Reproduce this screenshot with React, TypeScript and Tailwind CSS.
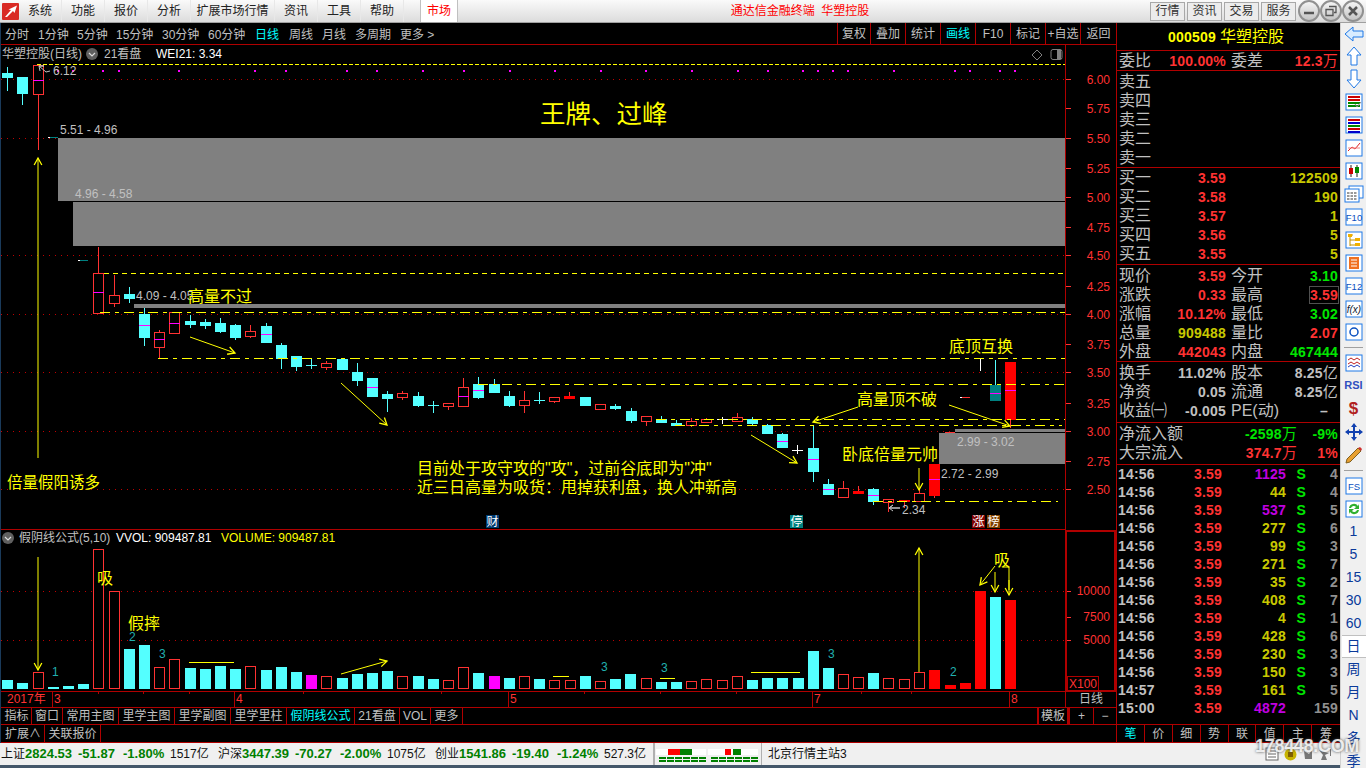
import React from "react";

const RED = "#ff3232";
const DK = "#b00000";
const CY = "#54ffff";
const YL = "#ffff00";

type K = "c" | "r" | "R" | "t" | "w";
const candles: [number, number, number, number, number, K, number?][] = [
  [7, 73, 77, 67, 91, "c"], [22, 77, 93, 77, 105, "c"], [38, 65, 94, 65, 150, "r", 80],
  [98, 273, 313, 247, 313, "r", 292], [114, 295, 303, 275, 307, "r"], [129, 294, 298, 287, 303, "c"],
  [144, 314, 337, 308, 346, "c", 325], [159, 332, 347, 330, 358, "r", 339], [174, 312, 333, 312, 333, "r", 323],
  [190, 321, 324, 315, 328, "c"], [205, 322, 325, 319, 329, "c"], [220, 323, 331, 318, 333, "c"],
  [235, 325, 337, 324, 340, "c"], [250, 331, 336, 325, 338, "r"], [266, 326, 342, 323, 343, "c", 334],
  [281, 345, 358, 343, 369, "c"], [296, 356, 366, 356, 371, "c"], [311, 365, 365, 359, 369, "c"],
  [326, 363, 367, 361, 370, "r"], [342, 359, 369, 358, 370, "c"], [357, 372, 380, 363, 386, "c"],
  [372, 378, 396, 378, 397, "c", 387], [387, 394, 398, 391, 412, "c"], [402, 393, 397, 391, 400, "r"],
  [418, 396, 405, 392, 407, "c"], [433, 405, 405, 401, 413, "c"], [448, 403, 406, 403, 410, "r"],
  [463, 387, 406, 378, 406, "r", 396], [478, 384, 397, 377, 399, "c", 390], [494, 384, 392, 379, 392, "c"],
  [509, 396, 405, 391, 407, "c"], [524, 400, 405, 391, 413, "r"], [539, 400, 400, 392, 404, "c"],
  [554, 397, 401, 397, 403, "r"], [569, 396, 398, 392, 398, "R"], [585, 397, 405, 397, 406, "c"],
  [600, 404, 409, 404, 409, "r"], [615, 406, 408, 404, 410, "c"], [631, 411, 420, 408, 423, "c"],
  [646, 416, 421, 416, 426, "r"], [661, 419, 422, 416, 422, "c"], [676, 423, 425, 420, 426, "c"],
  [691, 421, 425, 418, 427, "r"], [706, 419, 422, 418, 423, "r"], [722, 419, 419, 417, 424, "w"],
  [737, 417, 421, 413, 421, "r"], [752, 419, 423, 417, 426, "c"], [767, 425, 433, 424, 433, "c"],
  [782, 434, 447, 433, 448, "c", 441], [797, 450, 450, 445, 454, "w"], [813, 448, 471, 425, 482, "c", 459],
  [828, 484, 494, 479, 495, "c", 489], [843, 488, 497, 481, 497, "r"], [858, 491, 493, 486, 493, "R"],
  [873, 489, 501, 488, 505, "c", 495], [888, 499, 502, 499, 512, "r"], [904, 500, 501, 500, 508, "R"],
  [919, 493, 501, 490, 501, "r"], [934, 464, 495, 464, 498, "R", 479], [995, 385, 400, 360, 400, "t", 393],
  [1010, 362, 419, 362, 428, "R", 390],
];

const vols: [number, number, "c" | "r" | "R" | "m"][] = [
  [7, 680, "c"], [22, 683, "c"], [38, 672, "r"], [53, 687, "c"], [68, 686, "c"], [83, 684, "c"], [98, 549, "r"],
  [114, 591, "r"], [129, 649, "c"], [144, 645, "c"], [159, 667, "r"], [174, 659, "r"], [190, 668, "c"], [205, 669, "c"],
  [220, 666, "c"], [235, 669, "c"], [250, 666, "r"], [266, 670, "c"], [281, 667, "c"], [296, 672, "c"], [311, 675, "m"],
  [326, 676, "r"], [342, 678, "c"], [357, 674, "c"], [372, 673, "c"], [387, 671, "c"], [402, 676, "r"], [418, 676, "c"],
  [433, 679, "c"], [448, 680, "r"], [463, 667, "r"], [478, 673, "c"], [494, 676, "m"], [509, 678, "c"], [524, 676, "r"],
  [539, 679, "c"], [554, 680, "r"], [570, 680, "r"], [585, 676, "c"], [600, 681, "r"], [615, 679, "c"], [630, 674, "c"],
  [646, 678, "r"], [661, 682, "c"], [676, 682, "c"], [691, 681, "r"], [706, 679, "r"], [722, 680, "r"], [737, 676, "r"],
  [752, 680, "c"], [767, 678, "c"], [782, 678, "c"], [798, 678, "c"], [813, 651, "c"], [828, 668, "c"], [843, 674, "r"],
  [858, 677, "r"], [873, 673, "c"], [888, 678, "r"], [904, 679, "r"], [919, 672, "r"], [934, 670, "R"], [950, 685, "R"],
  [965, 683, "R"], [980, 591, "R"], [995, 597, "c"], [1010, 600, "R"],
];

const priceAxis: [string, number][] = [
  ["6.00", 79], ["5.75", 108], ["5.50", 138], ["5.25", 168], ["5.00", 197], ["4.75", 227], ["4.50", 255], ["4.25", 286],
  ["4.00", 314], ["3.75", 344], ["3.50", 372], ["3.25", 403], ["3.00", 431], ["2.75", 461], ["2.50", 489],
];
const dots = [42, 57, 72, 102, 118, 178, 254, 285, 346, 376, 422, 463, 509, 554, 600, 645, 691, 737, 767, 802, 817, 832, 847, 893, 954, 969, 999, 1014];

function Arrow({ x1, y1, x2, y2 }: { x1: number; y1: number; x2: number; y2: number }) {
  const a = Math.atan2(y2 - y1, x2 - x1);
  const h = 8;
  const p = (d: number) => `${x2 - h * Math.cos(a + d)},${y2 - h * Math.sin(a + d)}`;
  return (
    <g stroke={YL} strokeWidth="1" fill="none">
      <line x1={x1} y1={y1} x2={x2} y2={y2} />
      <polyline points={`${p(0.5)} ${x2},${y2} ${p(-0.5)}`} strokeWidth="1.3" />
    </g>
  );
}

function T({ x, y, s = 12, f = "#c0c0c0", a, children }: { x: number; y: number; s?: number; f?: string; a?: "end" | "middle"; children: React.ReactNode }) {
  return (
    <text x={x} y={y} fontSize={s} fill={f} textAnchor={a} dominantBaseline="central">
      {children}
    </text>
  );
}

function Chart() {
  return (
    <svg viewBox="1 45 1115 662" width={1115} height={662} className="block shrink-0">
      <g shapeRendering="crispEdges" fill="#808080">
        <rect x="58" y="138" width="1007" height="63" />
        <rect x="73" y="202" width="992" height="44" />
        <rect x="134" y="304" width="931" height="4" />
        <rect x="955" y="429" width="110" height="3" />
        <rect x="939" y="433" width="126" height="31" />
      </g>
      <g stroke="#c00000" strokeWidth="1" strokeDasharray="1 5" shapeRendering="crispEdges">
        {[79, 138, 255, 314, 372, 431, 489, 591, 640].map((y) => (
          <line key={y} x1="1" x2={y === 138 ? 58 : y === 431 ? 955 : 1065} y1={y + 0.5} y2={y + 0.5} />
        ))}
      </g>
      {dots.map((x) => (
        <rect key={x} x={x} y="70" width="2" height="2" fill="#ff00ff" shapeRendering="crispEdges" />
      ))}
      <g shapeRendering="crispEdges">
        <rect x="48" y="137" width="2" height="1" fill="#fff" />
        <rect x="50" y="137" width="8" height="1" fill="#008080" />
        <rect x="78" y="260" width="2" height="1" fill="#fff" />
        <rect x="80" y="260" width="8" height="1" fill="#008080" />
        <rect x="945" y="432" width="10" height="1" fill={RED} />
        <rect x="960" y="397" width="2" height="1" fill="#fff" />
        <rect x="962" y="397" width="8" height="1" fill={RED} />
        <rect x="980" y="358" width="1" height="13" fill="#fff" />
      </g>
      <g shapeRendering="crispEdges">
        {candles.map(([x, t, b, wt, wb, k, m], i) => {
          const col = k === "c" ? CY : k === "w" ? "#fff" : k === "t" ? CY : RED;
          return (
            <g key={i}>
              <line x1={x + 0.5} x2={x + 0.5} y1={wt} y2={wb} stroke={col} />
              {t === b ? (
                <line x1={x - 5} x2={x + 6} y1={t + 0.5} y2={t + 0.5} stroke={col} />
              ) : k === "r" ? (
                <rect x={x - 4.5} y={t + 0.5} width="10" height={b - t} fill="#000" stroke={RED} />
              ) : (
                <rect x={x - 5} y={t} width="11" height={b - t + 1} fill={k === "c" ? CY : k === "t" ? "#008080" : "#ff0000"} />
              )}
              {m ? <rect x={x - 5} y={m} width="11" height="1" fill="#ff00ff" /> : null}
            </g>
          );
        })}
      </g>
      <g stroke={YL} strokeWidth="1" shapeRendering="crispEdges">
        <line x1="37" x2="1065" y1="64.5" y2="64.5" strokeDasharray="4 2" />
        <line x1="104" x2="1065" y1="273.5" y2="273.5" strokeDasharray="5 4" />
        <line x1="100" x2="1065" y1="312.5" y2="312.5" strokeDasharray="10 5 4 5" />
        <line x1="158" x2="1065" y1="358.5" y2="358.5" strokeDasharray="10 5 4 5" />
        <line x1="478" x2="1065" y1="384.5" y2="384.5" strokeDasharray="10 5 4 5" />
        <line x1="656" x2="1065" y1="419.5" y2="419.5" strokeDasharray="10 5 4 5" />
        <line x1="675" x2="1062" y1="425.5" y2="425.5" strokeDasharray="10 5 4 5" />
        <line x1="873" x2="1058" y1="501.5" y2="501.5" strokeDasharray="10 5 4 5" />
        <line x1="553" x2="569" y1="676.5" y2="676.5" />
        <line x1="660" x2="675" y1="678.5" y2="678.5" />
        <line x1="751" x2="800" y1="672.5" y2="672.5" />
        <line x1="189" x2="234" y1="662.5" y2="662.5" />
      </g>
      <Arrow x1={38} y1={458} x2={38} y2={158} />
      <Arrow x1={190} y1={337} x2={235} y2={353} />
      <Arrow x1={341} y1={383} x2={387} y2={425} />
      <Arrow x1={751} y1={435} x2={797} y2={463} />
      <Arrow x1={858} y1={407} x2={813} y2={422} />
      <Arrow x1={949} y1={405} x2={1010} y2={426} />
      <Arrow x1={919} y1={468} x2={919} y2={490} />
      <Arrow x1={38} y1={557} x2={38} y2={670} />
      <Arrow x1={919} y1={672} x2={919} y2={548} />
      <Arrow x1={995} y1={566} x2={980} y2={585} />
      <Arrow x1={995} y1={572} x2={995} y2={592} />
      <polyline points="1003,567 1009,567 1009,590" stroke={YL} fill="none" />
      <Arrow x1={1009} y1={580} x2={1009} y2={595} />
      <Arrow x1={341} y1={674} x2={387} y2={661} />
      <g stroke="#c0c0c0" fill="none">
        <polyline points="50,71 46,72 39,66 44,66 39,66 40,71" />
        <polyline points="889,508 900,508 889,508 893,505 889,508 893,511" />
      </g>
      <g shapeRendering="crispEdges">
        {vols.map(([x, t, k]) =>
          k === "r" ? (
            <rect key={x} x={x - 4.5} y={t + 0.5} width="10" height={689 - t - 1} fill="#000" stroke={RED} />
          ) : (
            <rect key={x} x={x - 5} y={t} width="11" height={689 - t} fill={k === "c" ? CY : k === "m" ? "#ff00ff" : "#ff0000"} />
          ),
        )}
      </g>
      <g stroke={DK} shapeRendering="crispEdges" fill="none">
        <line x1="1" x2="1066" y1="529.5" y2="529.5" />
        <line x1="1" x2="1116" y1="691.5" y2="691.5" />
        <line x1="1065.5" x2="1065.5" y1="45" y2="529" />
        <rect x="1066" y="530.5" width="49" height="160" strokeWidth="2" />
        <rect x="1067.5" y="676.5" width="31" height="14" />
        <line x1="1065.5" x2="1065.5" y1="691" y2="707" />
        {[52, 234, 508, 812, 1009].map((x) => (
          <line key={x} x1={x + 0.5} x2={x + 0.5} y1="691" y2="707" />
        ))}
        {[98, 143, 189, 303, 441, 584, 660, 736, 861, 911].map((x) => (
          <line key={x} x1={x + 0.5} x2={x + 0.5} y1="691" y2="694" />
        ))}
        {priceAxis.map(([, y]) => (
          <line key={y} x1="1066" x2="1071" y1={y + 0.5} y2={y + 0.5} stroke={RED} />
        ))}
        {[591, 617, 640].map((y) => (
          <line key={y} x1="1067" x2="1071" y1={y + 0.5} y2={y + 0.5} stroke={RED} />
        ))}
      </g>
      {priceAxis.map(([l, y]) => (
        <T key={l} x={1110} y={y + 0.5} f={RED} a="end">{l}</T>
      ))}
      <T x={1110} y={591} f={RED} a="end">10000</T>
      <T x={1110} y={617} f={RED} a="end">7500</T>
      <T x={1110} y={640} f={RED} a="end">5000</T>
      <T x={1069} y={683.5} f={RED}>X100</T>
      <T x={1091} y={699} a="middle">日线</T>
      <T x={7} y={699} f={RED}>2017年</T>
      <T x={54} y={699} f={RED}>3</T>
      <T x={236} y={699} f={RED}>4</T>
      <T x={510} y={699} f={RED}>5</T>
      <T x={814} y={699} f={RED}>7</T>
      <T x={1011} y={699} f={RED}>8</T>
      <T x={2} y={54}>华塑控股(日线)</T>
      <circle cx="92" cy="54" r="6" fill="#606060" />
      <polyline points="89,53 92,56 95,53" stroke="#ddd" fill="none" strokeWidth="1.2" />
      <T x={104} y={54}>21看盘</T>
      <T x={156} y={54} f="#ffffff">WEI21: 3.34</T>
      <polygon points="1037,50 1042,55 1037,60 1032,55" fill="none" stroke="#808080" />
      <rect x="1051" y="49.5" width="11" height="10" rx="2" fill="#000" stroke="#808080" />
      <rect x="1057" y="50" width="4" height="9" fill="#808080" />
      <circle cx="8" cy="538" r="6" fill="#606060" />
      <polyline points="5,537 8,540 11,537" stroke="#ddd" fill="none" strokeWidth="1.2" />
      <T x={19} y={538}>假阴线公式(5,10)</T>
      <T x={116} y={538} f="#ffffff">VVOL: 909487.81</T>
      <T x={221} y={538} f={YL}>VOLUME: 909487.81</T>
      <T x={53} y={71}>6.12</T>
      <T x={60} y={130}>5.51 - 4.96</T>
      <T x={75} y={194}>4.96 - 4.58</T>
      <T x={136} y={296}>4.09 - 4.05</T>
      <T x={957} y={442}>2.99 - 3.02</T>
      <T x={941} y={474}>2.72 - 2.99</T>
      <T x={902} y={510}>2.34</T>
      <T x={540} y={114} s={25.5} f={YL}>王牌、过峰</T>
      <T x={188} y={296} s={16} f={YL}>高量不过</T>
      <T x={7} y={482} s={15.5} f={YL}>倍量假阳诱多</T>
      <T x={417} y={468} s={16} f={YL}>目前处于攻守攻的"攻"，过前谷底即为"冲"</T>
      <T x={417} y={487} s={16} f={YL}>近三日高量为吸货：甩掉获利盘，换人冲新高</T>
      <T x={949} y={346} s={16} f={YL}>底顶互换</T>
      <T x={857} y={399} s={16} f={YL}>高量顶不破</T>
      <T x={842} y={454} s={16} f={YL}>卧底倍量元帅</T>
      <T x={97} y={578} s={16} f={YL}>吸</T>
      <T x={128} y={623} s={16} f={YL}>假摔</T>
      <T x={994} y={560} s={16} f={YL}>吸</T>
      {[[52, 672, "1"], [129, 637, "2"], [159, 654, "3"], [601, 667, "3"], [661, 668, "3"], [828, 654, "3"], [950, 672, "2"]].map(([x, y, v]) => (
        <T key={`${x}`} x={x as number} y={y as number} f="#20b0b0">{v}</T>
      ))}
      {[[486, "财", "#003a70"], [790, "停", "#008080"], [972, "涨", "#800000"], [987, "榜", "#804000"]].map(([x, l, c]) => (
        <g key={`${x}`}>
          <rect x={x as number} y="515" width="13" height="13" fill={c as string} />
          <T x={(x as number) + 6.5} y={521.5} a="middle" f="#ffffff">{l}</T>
        </g>
      ))}
    </svg>
  );
}

function Cell({ w, cy, children }: { w: string; cy?: boolean; children: React.ReactNode }) {
  return (
    <div className={`${w} h-full shrink-0 flex items-center justify-center border-r border-[#b00000] text-[12px] whitespace-nowrap ${cy ? "text-[#00ffff]" : "text-[#c0c0c0]"}`}>
      {children}
    </div>
  );
}

function TopBar() {
  const periods: [string, string, boolean?][] = [
    ["分时", "w-[33px]"], ["1分钟", "w-[39px]"], ["5分钟", "w-[39px]"], ["15分钟", "w-[46px]"], ["30分钟", "w-[46px]"],
    ["60分钟", "w-[47px]"], ["日线", "w-[34px]", true], ["周线", "w-[33px]"], ["月线", "w-[33px]"], ["多周期", "w-[45px]"], ["更多 >", "w-[40px]"],
  ];
  const tools: [string, string, boolean?][] = [
    ["复权", "w-[33px]"], ["叠加", "w-[35px]"], ["统计", "w-[35px]"], ["画线", "w-[35px]", true], ["F10", "w-[35px]"],
    ["标记", "w-[35px]"], ["+自选", "w-[35px]"], ["返回", "w-[35px]"],
  ];
  return (
    <div className="h-[22px] shrink-0 flex items-center border-b border-[#b00000] text-[12px] text-[#c0c0c0] pl-[4px]">
      {periods.map(([l, w, c]) => (
        <span key={l} className={`${w} shrink-0 whitespace-nowrap pt-[2px] ${c ? "text-[#00ffff]" : ""}`}>{l}</span>
      ))}
      <div className="flex-1" />
      <div className="flex h-full border-l border-[#b00000]">
        {tools.map(([l, w, c], i) => (
          <div key={l} className={`${w} h-full flex items-center justify-center ${i < tools.length - 1 ? "border-r border-[#b00000]" : ""} ${c ? "text-[#00ffff]" : ""}`}>{l}</div>
        ))}
      </div>
    </div>
  );
}

function BottomTabs() {
  return (
    <>
      <div className="h-[18px] shrink-0 flex border-y border-[#b00000] pl-px">
        <Cell w="w-[30px]">指标</Cell>
        <Cell w="w-[31px]">窗口</Cell>
        <Cell w="w-[56px]">常用主图</Cell>
        <Cell w="w-[56px]">里学主图</Cell>
        <Cell w="w-[56px]">里学副图</Cell>
        <Cell w="w-[56px]">里学里柱</Cell>
        <Cell w="w-[68px]" cy>假阴线公式</Cell>
        <Cell w="w-[45px]">21看盘</Cell>
        <Cell w="w-[31px]">VOL</Cell>
        <Cell w="w-[32px]">更多</Cell>
        <div className="flex-1 border-r-2 border-[#b00000]" />
        <Cell w="w-[29px]">模板</Cell>
        <div className="w-[2px] h-full bg-[#b00000]" />
        <Cell w="w-[24px]">+</Cell>
        <div className="w-[22px] h-full flex items-center justify-center text-[12px] text-[#c0c0c0]">−</div>
      </div>
      <div className="h-[18px] shrink-0 flex border-b border-[#b00000] pl-px">
        <Cell w="w-[43px]">扩展∧</Cell>
        <Cell w="w-[56px]">关联报价</Cell>
      </div>
    </>
  );
}

const numCls = "text-[14px] font-bold tracking-[0.2px] leading-none";

function L({ children, w = "w-[32px]" }: { children: React.ReactNode; w?: string }) {
  return <span className={`${w} shrink-0 text-[16px] leading-none text-[#c0c0c0] whitespace-nowrap`}>{children}</span>;
}
function V({ children, c, w = "w-[75px]" }: { children: React.ReactNode; c: string; w?: string }) {
  return <span className={`${w} shrink-0 text-right whitespace-nowrap ${numCls}`} style={{ color: c }}>{children}</span>;
}

function Row2({ a, b, ac, c, d, dc }: { a: string; b: React.ReactNode; ac: string; c: string; d: React.ReactNode; dc: string }) {
  return (
    <div className="h-[19px] flex items-center pl-[2px]">
      <L>{a}</L>
      <V c={ac}>{b}</V>
      <span className="w-[5px] shrink-0" />
      <L>{c}</L>
      <V c={dc}>{d}</V>
    </div>
  );
}

const OL = "#c8c800";
const GR = "#00e600";
const GY = "#c0c0c0";

function RightPanel() {
  const buy: [string, string, string][] = [
    ["买一", "3.59", "122509"], ["买二", "3.58", "190"], ["买三", "3.57", "1"], ["买四", "3.56", "5"], ["买五", "3.55", "5"],
  ];
  const ticks: [string, string, boolean, number | string][] = [
    ["14:56", "1125", true, 4], ["14:56", "44", false, 4], ["14:56", "537", true, 5], ["14:56", "277", false, 6],
    ["14:56", "99", false, 3], ["14:56", "271", false, 7], ["14:56", "35", false, 2], ["14:56", "408", false, 7],
    ["14:56", "4", false, 1], ["14:56", "428", false, 6], ["14:56", "230", false, 3], ["14:56", "150", false, 3],
    ["14:57", "161", false, 5], ["15:00", "4872", true, 159],
  ];
  const sec = "shrink-0 border-b border-[#b00000]";
  return (
    <div className="w-[224px] shrink-0 flex flex-col border-l border-[#b00000]">
      <div className={`${sec} h-[28px] flex items-center justify-center gap-[4px] pr-[5px]`}>
        <span className={`${numCls} text-[#ffff00]`}>000509</span>
        <span className="text-[16px] leading-none text-[#ffff00]">华塑控股</span>
      </div>
      <div className={`${sec} h-[20px]`}>
        <Row2 a="委比" b="100.00%" ac={RED} c="委差" d={<>12.3<span className="font-normal text-[15px]">万</span></>} dc={RED} />
      </div>
      <div className={`${sec} h-[97px] pt-px`}>
        {["卖五", "卖四", "卖三", "卖二", "卖一"].map((l) => (
          <div key={l} className="h-[19px] flex items-center pl-[2px]"><L>{l}</L></div>
        ))}
      </div>
      <div className={`${sec} h-[97px]`}>
        {buy.map(([l, p, q]) => (
          <div key={l} className="h-[19px] flex items-center pl-[2px]">
            <L>{l}</L>
            <V c={RED}>{p}</V>
            <V c={OL} w="w-[112px]">{q}</V>
          </div>
        ))}
      </div>
      <div className={`${sec} h-[97px] pt-px`}>
        <Row2 a="现价" b="3.59" ac={RED} c="今开" d="3.10" dc={GR} />
        <div className="h-[19px] flex items-center pl-[2px]">
          <L>涨跌</L>
          <V c={RED}>0.33</V>
          <span className="w-[5px] shrink-0" />
          <L>最高</L>
          <span className="w-[46px] shrink-0" />
          <span className={`w-[30px] h-[18px] shrink-0 flex items-center justify-center border border-[#505050] text-[#ff3232] ${numCls}`}>3.59</span>
        </div>
        <Row2 a="涨幅" b="10.12%" ac={RED} c="最低" d="3.02" dc={GR} />
        <Row2 a="总量" b="909488" ac={OL} c="量比" d="2.07" dc={RED} />
        <Row2 a="外盘" b="442043" ac={RED} c="内盘" d="467444" dc={GR} />
      </div>
      <div className={`${sec} h-[61px] pt-px`}>
        <Row2 a="换手" b="11.02%" ac={GY} c="股本" d={<>8.25<span className="font-normal text-[15px]">亿</span></>} dc={GY} />
        <Row2 a="净资" b="0.05" ac={GY} c="流通" d={<>8.25<span className="font-normal text-[15px]">亿</span></>} dc={GY} />
        <Row2 a="收益㈠" b="-0.005" ac={GY} c="PE(动)" d={<span className="mr-[10px]">–</span>} dc={GY} />
      </div>
      <div className={`${sec} h-[42px] pt-px`}>
        <div className="h-[19px] flex items-center pl-[2px]">
          <L w="w-[64px]">净流入额</L>
          <V c={GR} w="w-[114px]">-2598<span className="font-normal text-[15px]">万</span></V>
          <V c={GR} w="w-[41px]">-9%</V>
        </div>
        <div className="h-[19px] flex items-center pl-[2px]">
          <L w="w-[64px]">大宗流入</L>
          <V c={RED} w="w-[114px]">374.7<span className="font-normal text-[15px]">万</span></V>
          <V c={RED} w="w-[41px]">1%</V>
        </div>
      </div>
      <div className={`${sec} h-[260px]`}>
        {ticks.map(([t, q, big, n], i) => (
          <div key={i} className="h-[18px] flex items-center pl-px">
            <span className={`w-[42px] shrink-0 text-[#c0c0c0] ${numCls}`}>{t}</span>
            <V c={RED} w="w-[62px]">3.59</V>
            <V c={big ? "#c000e0" : OL} w="w-[64px]">{q}</V>
            <span className={`w-[20px] shrink-0 text-right ${numCls} text-[#00e600]`}>{i < 13 ? "S" : ""}</span>
            <V c="#909090" w="w-[32px]">{n}</V>
          </div>
        ))}
      </div>
      <div className="h-[18px] shrink-0 flex border-b border-[#b00000]">
        {["笔", "价", "细", "势", "联", "值", "主", "筹"].map((l, i) => (
          <div key={l} className={`w-[28px] h-full flex items-center justify-center text-[12px] ${i < 7 ? "border-r border-[#b00000]" : ""} ${i === 0 ? "text-[#00ffff]" : "text-[#c0c0c0]"}`}>{l}</div>
        ))}
      </div>
    </div>
  );
}

function Logo() {
  return (
    <svg width="17" height="17" viewBox="0 0 17 17" className="ml-[2px] shrink-0">
      <rect width="17" height="17" rx="1" fill="#d92a24" />
      <path d="M3 14 L9 7 L6.5 6.5 L15 2.5 L12.5 10 L11 8 L5 14 Z" fill="#fff" />
    </svg>
  );
}

function WinBtn({ children }: { children: React.ReactNode }) {
  return (
    <div className="w-[22px] h-[22px] rounded-full border-2 border-[#909090] bg-gradient-to-b from-[#f4f4f4] to-[#c4c4c4] flex items-center justify-center">
      <svg width="14" height="14" viewBox="0 0 14 14" stroke="#555" fill="none">{children}</svg>
    </div>
  );
}

function TitleBar() {
  const items: [string, string][] = [
    ["系统", "w-[43px]"], ["功能", "w-[43px]"], ["报价", "w-[43px]"], ["分析", "w-[43px]"], ["扩展市场行情", "w-[84px]"],
    ["资讯", "w-[43px]"], ["工具", "w-[43px]"], ["帮助", "w-[43px]"],
  ];
  return (
    <div className="h-[23px] shrink-0 flex items-center bg-gradient-to-b from-[#fafafa] to-[#dcdcdc] border-b border-[#a0a0a0] text-[12px] text-[#222]">
      <Logo />
      {items.map(([l, w]) => (
        <div key={l} className={`${w} h-full flex items-center justify-center border-r border-[#e8e8e8]`}>{l}</div>
      ))}
      <div className="ml-[16px] w-[38px] h-full flex items-center justify-center bg-white border-x border-[#c0c0c0] text-[#ff0000]">市场</div>
      <div className="flex-1 text-center text-[#ff0000] pr-[8px]">通达信金融终端&nbsp;&nbsp;华塑控股</div>
      <div className="flex gap-[2px] h-full items-center">
        {["行情", "资讯", "交易", "服务"].map((l) => (
          <div key={l} className="w-[35px] h-[19px] flex items-center justify-center border border-[#a8a8a8] bg-[#ececec] text-[#333]">{l}</div>
        ))}
      </div>
      <div className="flex items-center ml-[2px] mr-[2px] gap-0">
        <WinBtn><path d="M2 9h10" strokeWidth="2.5" /></WinBtn>
        <WinBtn><path d="M5 2.5h7v6h-2M2 5.5h7v6H2z" strokeWidth="1.3" /></WinBtn>
        <WinBtn><path d="M3 3l8 8M11 3l-8 8" strokeWidth="2.5" /></WinBtn>
      </div>
    </div>
  );
}

function StatusBar() {
  const B = ({ w, children }: { w: string; children: React.ReactNode }) => (
    <span className={`${w} shrink-0 text-[13px] font-bold text-[#008000] whitespace-nowrap`}>{children}</span>
  );
  const P = ({ w, children }: { w: string; children: React.ReactNode }) => (
    <span className={`${w} shrink-0 text-[12px] text-[#111] whitespace-nowrap`}>{children}</span>
  );
  const Group = (a: string, b: string, c: string, d: string, e: string, w = "w-[48px]") => (
    <>
      <P w="w-[24px]">{a}</P>
      <B w="w-[53px]">{b}</B>
      <B w="w-[45px]">{c}</B>
      <B w="w-[47px]">{d}</B>
      <P w={w}>{e}</P>
    </>
  );
  return (
    <div className="h-[22px] shrink-0 flex items-center bg-[#f0f0f0] pl-[1px] relative">
      {Group("上证", "2824.53", "-51.87", "-1.80%", "1517亿")}
      {Group("沪深", "3447.39", "-70.27", "-2.00%", "1075亿")}
      {Group("创业", "1541.86", "-19.40", "-1.24%", "527.3亿", "w-[49px]")}
      <div className="w-[2px] h-full bg-[#b0b0b0] shrink-0" />
      <svg width="106" height="18" viewBox="0 0 106 18" className="shrink-0" shapeRendering="crispEdges">
        <rect x="1" y="4" width="50" height="6" fill="#fff" />
        <rect x="53" y="4" width="50" height="6" fill="#fff" />
        <rect x="13" y="4" width="12" height="6" fill="#ff0000" />
        <rect x="25" y="4" width="12" height="6" fill="#008000" />
        <rect x="70" y="4" width="6" height="6" fill="#ff0000" />
        <rect x="78" y="4" width="8" height="6" fill="#008000" />
        {[0, 1, 2, 3, 4, 5].flatMap((i) => [4 + i * 8, 56 + i * 8]).map((x) => (
          <g key={x} fill="#008000">
            <rect x={x} y="12" width="7" height="2" />
            <rect x={x} y="15" width="7" height="2" />
          </g>
        ))}
      </svg>
      <div className="w-[1px] h-full bg-[#b0b0b0] shrink-0" />
      <span className="ml-[6px] text-[12px] text-[#111]">北京行情主站3</span>
      <div className="flex-1" />
      <div className="flex items-center gap-[5px] mr-[8px]">
        <svg width="14" height="14" viewBox="0 0 14 14" stroke="#666" fill="#fff"><rect x="1" y="1" width="12" height="12" /><path d="M3 4h8M3 7h8M3 10h8" /></svg>
        <svg width="13" height="13" viewBox="0 0 13 13"><circle cx="6.5" cy="6.5" r="6" fill="#c8b400" /><rect x="4" y="4" width="5" height="5" fill="#806000" /></svg>
        <svg width="30" height="13" viewBox="0 0 30 13" fill="#777"><path d="M2 3l5 3 3-4v9H3zM17 2l4 5-2 5h6l-2-5 4-2-5-1zM29 1v7h-1V1z" /></svg>
      </div>
    </div>
  );
}

const Fr = ({ children }: { children?: React.ReactNode }) => (
  <svg width="18" height="18" viewBox="0 0 18 18" className="block">
    <rect x="1" y="1" width="16" height="16" fill="#fff" stroke="#1e78e6" />
    {children}
  </svg>
);
const FT = ({ t }: { t: string }) => (
  <Fr>
    <text x="9" y="12.5" textAnchor="middle" fontSize="9.5" fill="#0a50c0">{t}</text>
  </Fr>
);

function SideToolbar() {
  const bars = (c: string[]) => c.map((col, i) => <rect key={i} x="3" y={3 + i * 3} width="12" height="2" fill={col} />);
  const icons: React.ReactNode[] = [
    <svg width="20" height="16" viewBox="0 0 20 16"><path d="M1 8l8-7v4h10v6H9v4z" fill="#d8ecff" stroke="#1e78e6" /></svg>,
    <svg width="16" height="20" viewBox="0 0 16 20"><path d="M8 1l7 8h-4v10H5V9H1z" fill="#fff" stroke="#1e78e6" /></svg>,
    <svg width="16" height="20" viewBox="0 0 16 20"><path d="M8 19L1 11h4V1h6v10h4z" fill="#fff" stroke="#1e78e6" /></svg>,
    <Fr>{bars(["#c00", "#c00", "#080", "#080"])}<path d="M10 11l2 3 4-5" stroke="#888" fill="none" /></Fr>,
    <Fr>{bars(["#c00", "#00c", "#080", "#c00", "#00c"])}</Fr>,
    <Fr><polyline points="3,12 7,8 10,10 15,4" fill="none" stroke="#e02020" /><line x1="3" x2="15" y1="9" y2="9" stroke="#f08080" /></Fr>,
    <Fr><path d="M6 3v12M12 3v12" stroke="#222" /><rect x="4" y="6" width="4" height="6" fill="#c00" /><rect x="10" y="5" width="4" height="6" fill="#080" /></Fr>,
    <svg width="20" height="18" viewBox="0 0 20 18"><rect x="5" y="1" width="14" height="12" fill="#fff" stroke="#1e78e6" /><rect x="1" y="4" width="14" height="13" fill="#fff" stroke="#1e78e6" /><path d="M3 8h10M3 11h10M3 14h10" stroke="#333" strokeDasharray="2.5 1" /></svg>,
    <FT t="F10" />,
    <Fr><path d="M5 4h3M5 4v11M5 9h5M5 14h5" stroke="#c09000" fill="none" /><rect x="3" y="3" width="4" height="3" fill="#f0b000" /><rect x="10" y="7" width="5" height="3" fill="#f0b000" /><rect x="10" y="12" width="5" height="3" fill="#f0b000" /></Fr>,
    <Fr><rect x="4" y="3" width="10" height="12" fill="#f07020" /><path d="M6 6h6M6 9h6M6 12h6" stroke="#fff" /></Fr>,
    <FT t="F12" />,
    <Fr><text x="9" y="12.5" textAnchor="middle" fontSize="10" fontStyle="italic" fill="#123">f(x)</text></Fr>,
    <Fr><circle cx="9" cy="9" r="4" fill="none" stroke="#0a50c0" strokeWidth="1.5" /></Fr>,
    null,
    <Fr><path d="M3 6l3-2 3 2 3-2 3 2M3 10l3-2 3 2 3-2 3 2" stroke="#c02020" fill="none" /><path d="M3 13l3-2 3 2 3-2 3 2" stroke="#2040c0" fill="none" /></Fr>,
    <span className="text-[11px] font-bold text-[#3050c0] leading-none">RSI</span>,
    <span className="text-[17px] font-bold text-[#b02020] leading-none">$</span>,
    <svg width="20" height="20" viewBox="0 0 20 20" fill="#1040b0"><path d="M10 1l3 4h-2v4h4V7l4 3-4 3v-2h-4v4h2l-3 4-3-4h2v-4H5v2l-4-3 4-3v2h4V5H7z" /></svg>,
    <svg width="20" height="20" viewBox="0 0 20 20"><path d="M3 14L14 3l3 3L6 17l-4 1z" fill="#e8a030" stroke="#806020" /><path d="M14 3l3 3 1-2-2-2z" fill="#d03030" /></svg>,
    null,
    <FT t="FS" />,
    <Fr><path d="M4 8a5 5 0 0 1 9-2l1-2v5h-5l2-2a3 3 0 0 0-5 1z" fill="#30b030" /><path d="M14 10a5 5 0 0 1-9 2l-1 2V9h5l-2 2a3 3 0 0 0 5-1z" fill="#30b030" /></Fr>,
  ];
  const text = ["1", "5", "15", "30", "60", "日", "周", "月", "N", "多", "季"];
  return (
    <div className="w-[26px] shrink-0 flex flex-col items-center bg-[#f0f0f0] overflow-hidden h-[745px] border-l border-[#d0d0d0]">
      {icons.map((ic, i) =>
        ic === null ? (
          <div key={i} className="h-[8px] w-[19px] shrink-0 flex items-center"><div className="w-full h-px bg-[#a0a0a0]" /></div>
        ) : (
          <div key={i} className={`${i === 0 ? "h-[21px]" : "h-[23px]"} shrink-0 flex items-center justify-center`}>{ic}</div>
        ),
      )}
      {text.map((t) => (
        <div key={t} className={`h-[23px] w-[24px] shrink-0 flex items-center justify-center text-[14px] text-[#0a3a9a] ${t === "日" ? "bg-white border-y border-[#c0c0c0]" : ""}`}>{t}</div>
      ))}
    </div>
  );
}

export default function App() {
  return (
    <div className="w-[1366px] h-[768px] relative overflow-hidden bg-black flex flex-col font-['Liberation_Sans','Noto_Sans_CJK_SC',sans-serif]">
      <TitleBar />
      <div className="flex-1 flex min-h-0">
        <div className="w-[1340px] shrink-0 flex flex-col">
          <div className="flex border-l border-[#1a3a5a] h-[720px]">
            <div className="w-[1115px] shrink-0 flex flex-col">
              <TopBar />
              <Chart />
              <BottomTabs />
            </div>
            <RightPanel />
          </div>
          <StatusBar />
          <div className="flex-1 bg-[#44576a]" />
        </div>
        <SideToolbar />
      </div>
      <div className="absolute left-[1255px] top-[733px] text-[18px] font-bold text-white/85 tracking-[-0.3px] [text-shadow:0_0_3px_#444]">178448.COM</div>
    </div>
  );
}
